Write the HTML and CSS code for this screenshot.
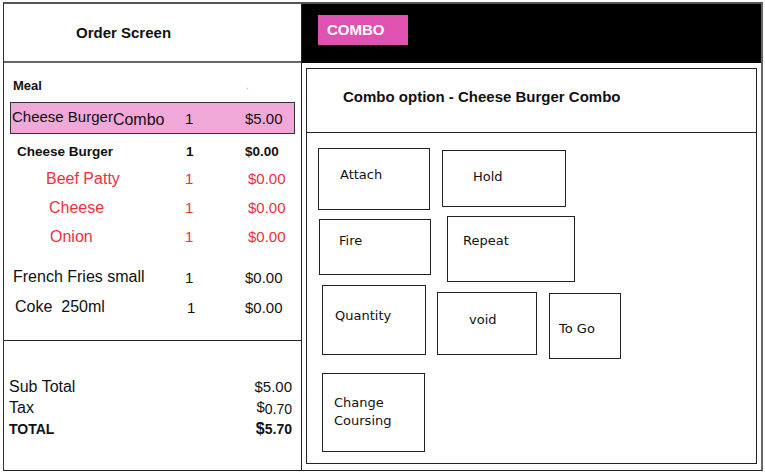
FILE: index.html
```html
<!DOCTYPE html>
<html lang="en">
<head>
<meta charset="utf-8">
<title>Order Screen</title>
<link rel="stylesheet" href="styles.css">
</head>
<body>
<div class="screen">
  <section class="order">
    <header class="order-head">Order Screen</header>
    <div class="items">
      <div class="row meal"><span class="name">Meal</span><span></span><span class="dot">.</span></div>
      <div class="row combo-row"><span class="name"><span class="lift">Cheese Burger</span><span class="combo-word">Combo</span></span><span class="qty">1</span><span class="price">$5.00</span></div>
      <div class="row main-item"><span class="name">Cheese Burger</span><span class="qty">1</span><span class="price">$0.00</span></div>
      <div class="row sub"><span class="name">Beef Patty</span><span class="qty">1</span><span class="price">$0.00</span></div>
      <div class="row sub sub-2"><span class="name">Cheese</span><span class="qty">1</span><span class="price">$0.00</span></div>
      <div class="row sub sub-3"><span class="name">Onion</span><span class="qty">1</span><span class="price">$0.00</span></div>
      <div class="row side fries"><span class="name">French Fries small</span><span class="qty">1</span><span class="price">$0.00</span></div>
      <div class="row side coke"><span class="name">Coke&nbsp; 250ml</span><span class="qty">1</span><span class="price">$0.00</span></div>
    </div>
    <div class="totals">
      <div class="total-row"><span>Sub Total</span><span>$5.00</span></div>
      <div class="total-row"><span>Tax</span><span>$<span class="cents">0.70</span></span></div>
      <div class="total-row grand"><span>TOTAL</span><span><span class="dollar">$</span>5.70</span></div>
    </div>
  </section>
  <section class="options">
    <div class="topbar"><div class="tab">COMBO</div></div>
    <div class="panel">
      <div class="panel-title">Combo option - Cheese Burger Combo</div>
      <div class="actions">
        <div class="action-row row-1">
          <div class="btn b-attach">Attach</div>
          <div class="btn b-hold">Hold</div>
        </div>
        <div class="action-row row-2">
          <div class="btn b-fire">Fire</div>
          <div class="btn b-repeat">Repeat</div>
        </div>
        <div class="action-row row-3">
          <div class="btn b-qty">Quantity</div>
          <div class="btn b-void">void</div>
          <div class="btn b-togo">To Go</div>
        </div>
        <div class="action-row row-4">
          <div class="btn b-course">Change<br>Coursing</div>
        </div>
      </div>
    </div>
  </section>
</div>
</body>
</html>
```

FILE: styles.css
```css
* { box-sizing: border-box; }

body {
  margin: 0;
  background: #fff;
  font-family: "Liberation Sans", Arial, sans-serif;
  color: #111;
}

.screen {
  display: flex;
  margin: 2px 0 0 3px;
  width: 760px;
  height: 469px;
  border-top: 2px solid #555;
  border-left: 1px solid #333;
  border-right: 2px solid #666;
  border-bottom: 1px solid #222;
}

/* ---------- left: order list ---------- */
.order {
  width: 298px;
  display: flex;
  flex-direction: column;
  border-right: 1px solid #222;
}

.order-head {
  height: 59px;
  display: flex;
  align-items: center;
  padding-left: 72px;
  font-size: 15px;
  font-weight: bold;
  border-bottom: 2px solid #666;
}

.items {
  height: 278px;
  padding-top: 11px;
  border-bottom: 1px solid #222;
}

.row {
  display: grid;
  grid-template-columns: 181px 60px 1fr;
  align-items: center;
  white-space: nowrap;
}

.meal {
  height: 22px;
  font-size: 13px;
  font-weight: bold;
}
.meal .name { padding-left: 9px; }
.dot { color: #9aa; font-size: 10px; font-weight: normal; padding-left: 1px; }

.combo-row {
  margin: 6px 0 0 6px;
  width: 285px;
  height: 32px;
  background: #f0a8d8;
  border: 1px solid #333;
  grid-template-columns: 174px 60px 1fr;
  font-size: 15px;
}
.combo-row .name { padding-left: 1px; }
.lift { vertical-align: 3px; }
.combo-word { font-size: 16px; }

.main-item {
  margin-top: 4px;
  height: 26px;
  font-size: 13.5px;
  font-weight: bold;
}
.main-item .name { padding-left: 13px; }
.main-item .qty { padding-left: 1px; }

.sub {
  height: 29px;
  font-size: 16px;
  color: #ee2f3d;
}
.sub .name { padding-left: 42px; }
.sub-2 .name { padding-left: 45px; }
.sub-3 .name { padding-left: 46px; }
.sub .price { padding-left: 3px; font-size: 15px; }
.sub .qty { font-size: 15px; }

.side {
  height: 30px;
  font-size: 16px;
}
.side .price, .side .qty { font-size: 15px; }
.fries { margin-top: 11px; }
.fries .name { padding-left: 9px; }
.coke .name { padding-left: 11px; }
.coke .qty { padding-left: 2px; }

.totals {
  flex: 1;
  padding: 35px 9px 0 5px;
}

.total-row {
  display: flex;
  justify-content: space-between;
  align-items: center;
  height: 21px;
  font-size: 16px;
}
.total-row > span:last-child { font-size: 15px; }
.cents { font-size: 14px; vertical-align: -2px; }

.grand {
  font-weight: bold;
  font-size: 14px;
}
.grand > span:last-child { font-size: 14px; }
.dollar { font-size: 16px; }

/* ---------- right: options ---------- */
.options {
  flex: 1;
  display: flex;
  flex-direction: column;
}

.topbar {
  height: 59px;
  background: #000;
  padding: 11px 0 0 16px;
}

.tab {
  width: 90px;
  height: 30px;
  line-height: 30px;
  padding-left: 9px;
  background: #e052b2;
  color: #fff;
  font-size: 15px;
  font-weight: bold;
}

.panel {
  margin: 5px 4px 0 4px;
  height: 396px;
  border: 1px solid #222;
}

.panel-title {
  height: 64px;
  display: flex;
  align-items: center;
  padding: 0 0 9px 36px;
  font-size: 15px;
  font-weight: bold;
  border-bottom: 1px solid #222;
}

.action-row {
  display: flex;
  align-items: flex-start;
}
.row-1 { margin-top: 15px; }
.row-2 { margin-top: 6px; }
.row-3 { margin-top: 3px; }
.row-4 { margin-top: 14px; }

.btn {
  border: 1px solid #222;
  font-family: "DejaVu Sans", Verdana, sans-serif;
  font-size: 13px;
  line-height: 16px;
  color: #111;
  white-space: nowrap;
}

.b-attach { margin-left: 11px; width: 112px; height: 62px; padding: 18px 0 0 21px; }
.b-hold   { margin: 2px 0 0 12px; width: 124px; height: 57px; padding: 18px 0 0 30px; }
.b-fire   { margin: 3px 0 0 12px; width: 112px; height: 56px; padding: 13px 0 0 19px; }
.b-repeat { margin-left: 16px; width: 128px; height: 66px; padding: 16px 0 0 15px; }
.b-qty    { margin-left: 15px; width: 104px; height: 70px; padding: 22px 0 0 12px; }
.b-void   { margin: 7px 0 0 11px; width: 100px; height: 63px; padding: 19px 0 0 31px; }
.b-togo   { margin: 8px 0 0 12px; width: 72px; height: 66px; padding: 27px 0 0 9px; }
.b-course { margin-left: 15px; width: 103px; height: 79px; padding: 20px 0 0 11px; line-height: 18px; }
```
